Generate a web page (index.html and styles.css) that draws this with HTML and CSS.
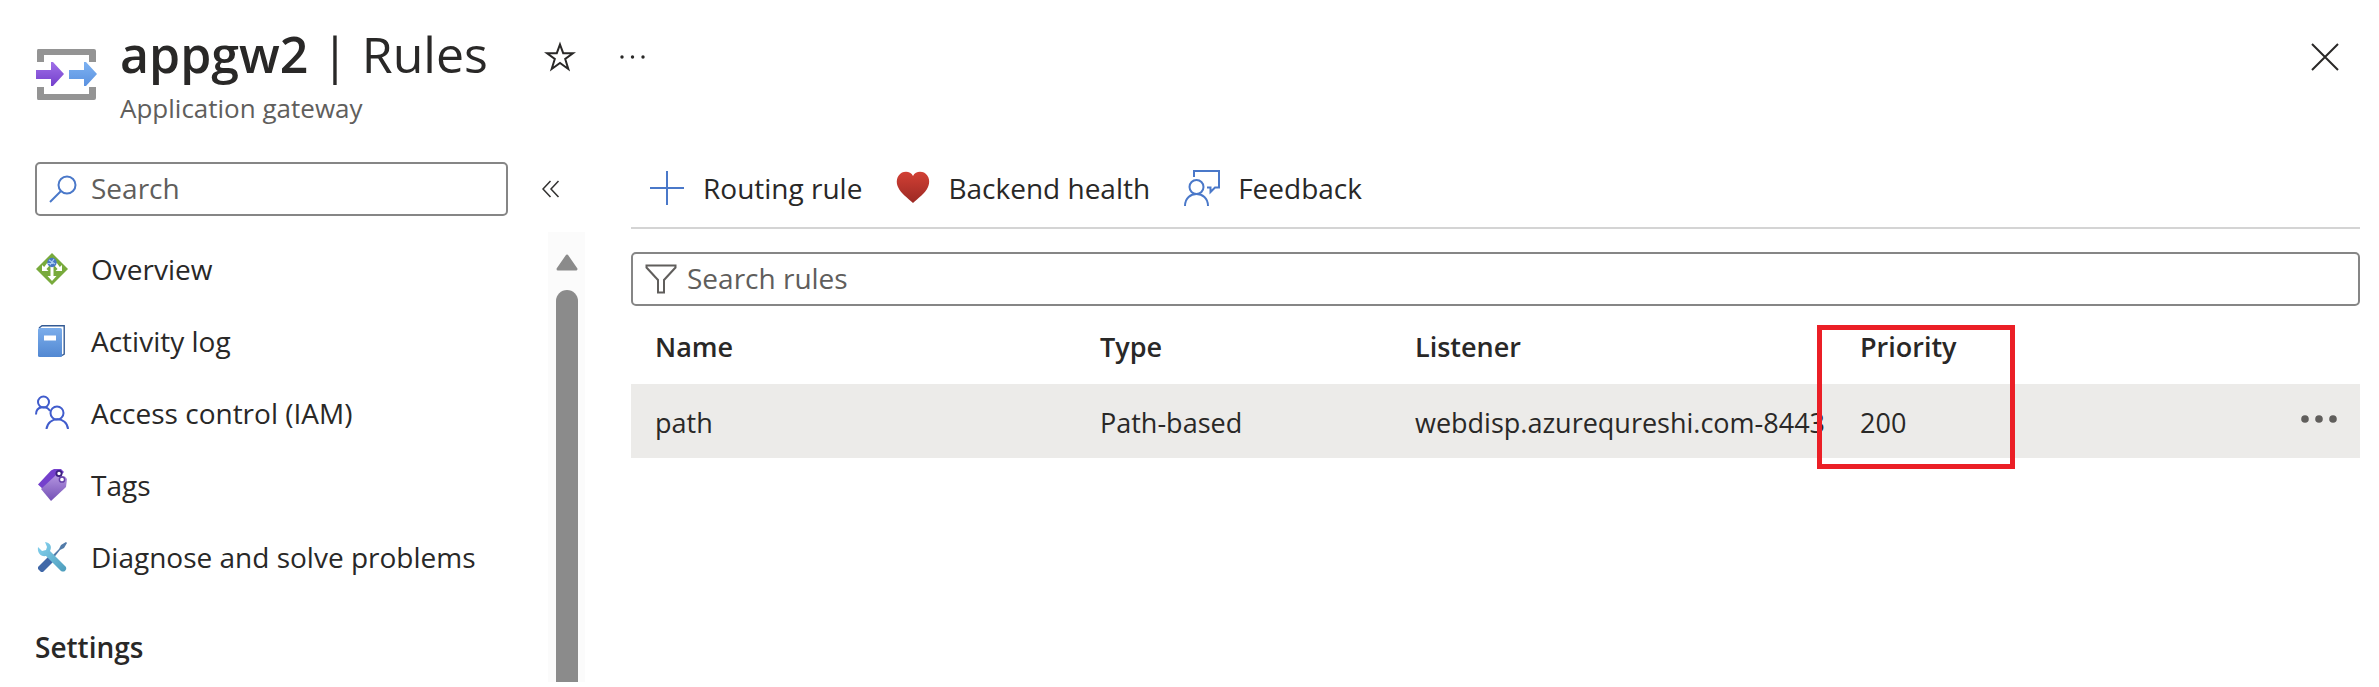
FILE: index.html
```html
<!DOCTYPE html>
<html lang="en">
<head>
<meta charset="utf-8">
<title>appgw2 | Rules</title>
<link rel="stylesheet" href="styles.css">
</head>
<body>
<div class="blade">
  <header class="blade-header">
    <svg class="resource-icon" viewBox="0 0 62 52" aria-hidden="true">
      <defs>
        <linearGradient id="gPurple" x1="0" y1="0" x2="0" y2="1"><stop offset="0" stop-color="#a070e8"/><stop offset="1" stop-color="#7440cc"/></linearGradient>
        <linearGradient id="gBlue" x1="0" y1="0" x2="0" y2="1"><stop offset="0" stop-color="#7db2f2"/><stop offset="1" stop-color="#5b92e0"/></linearGradient>
      </defs>
      <path d="M2 0H58Q60 0 60 2V13H53V6H8V13H1V2Q1 0 2 0ZM1 38H8V45H53V38H60V49Q60 51 58 51H2Q1 51 1 49Z" fill="#949494"/>
      <path d="M0 21H15V13H17L28 25L17 37H15V30H0Z" fill="url(#gPurple)"/>
      <path d="M33 21H48V13H50L61 25L50 37H48V30H33Z" fill="url(#gBlue)"/>
    </svg>
    <div class="titles">
      <div class="title-row">
        <h1><strong>appgw2</strong> | Rules</h1>
        <button class="icon-button star" aria-label="Add to favorites">
          <svg width="32" height="32" viewBox="0 0 32 32"><path d="M16 3.500L19.200 12.200H29L21.200 18L24.300 28L16 22L7.700 28L10.800 18L3 12.200H12.800Z" fill="none" stroke="#292827" stroke-width="2"/></svg>
        </button>
        <button class="icon-button" aria-label="More">
          <svg width="28" height="32" viewBox="0 0 28 32" fill="#292827"><circle cx="3" cy="16" r="1.700"/><circle cx="13.500" cy="16" r="1.700"/><circle cx="24" cy="16" r="1.700"/></svg>
        </button>
      </div>
      <p class="subtitle">Application gateway</p>
    </div>
    <button class="icon-button close" aria-label="Close">
      <svg width="28" height="28" viewBox="0 0 28 28"><path d="M1 1L27 27M27 1L1 27" stroke="#292827" stroke-width="2"/></svg>
    </button>
  </header>

  <div class="columns">
    <aside class="sidebar">
      <div class="search-row">
        <label class="field menu-search">
          <svg width="28" height="28" viewBox="0 0 28 28" fill="none" stroke="#4a78c9" stroke-width="2"><circle cx="18" cy="10" r="8.500"/><path d="M12 16L1 27"/></svg>
          <input type="text" placeholder="Search" aria-label="Search">
        </label>
        <button class="icon-button collapse" aria-label="Collapse menu">
          <svg width="18" height="18" viewBox="0 0 18 18" fill="none" stroke="#323130" stroke-width="1.500"><path d="M8.500 1L1 9L8.500 17M16.500 1L9 9L16.500 17"/></svg>
        </button>
      </div>
      <div class="menu">
        <nav>
          <a href="#" class="menu-item">
            <svg viewBox="0 0 32 32"><path d="M16 0L32 16L16 32L0 16Z" fill="#78aa3c"/><g fill="#fff"><path d="M14.500 12H17.500V23H20.500L16 28L11.500 23H14.500Z"/><path d="M11.500 9.500L14 12L10.500 16L12.500 18H6V12L8.200 14Z"/><path d="M20.500 9.500L18 12L21.500 16L19.500 18H26V12L23.800 14Z"/></g><circle cx="16" cy="9.500" r="4.700" fill="#4777c4"/><path d="M13 7L19 11M18 6L14 12M12 10.500H17" stroke="#a9ccf1" stroke-width="1.200"/></svg>
            Overview</a>
          <a href="#" class="menu-item">
            <svg viewBox="0 0 32 32"><defs><linearGradient id="gBook" x1="0" y1="0" x2="0" y2="1"><stop offset="0" stop-color="#7badeb"/><stop offset="1" stop-color="#5288d2"/></linearGradient></defs><path d="M3 3L6 .800H28.200V29L25 31" fill="#fff" stroke="#335a94" stroke-width="1.400"/><rect x="2" y="3" width="24" height="29" rx="1.500" fill="url(#gBook)"/><rect x="8" y="10.500" width="12" height="5" fill="#fff"/></svg>
            Activity log</a>
          <a href="#" class="menu-item">
            <svg viewBox="0 0 32 32" fill="none" stroke="#405ccc" stroke-width="2" overflow="visible"><circle cx="7.500" cy="5" r="5.500"/><path d="M0 17.500C0 8.500 11 8.500 14 14"/><circle cx="21" cy="16" r="6.500"/><path d="M10.500 32C12 19 31 19 32 32"/></svg>
            Access control (IAM)</a>
          <a href="#" class="menu-item">
            <svg viewBox="0 0 32 32"><defs><linearGradient id="gTag" x1="0" y1="0" x2="0" y2="1"><stop offset="0" stop-color="#b394e0"/><stop offset="1" stop-color="#7450b5"/></linearGradient></defs><path d="M2 15.500L15 1.500L18 0H25L28 3L9 22Z" fill="#7440cc"/><path d="M5 20L20 6L29 7.500L31 10L30 18L15 32Z" fill="url(#gTag)"/><circle cx="23" cy="4.500" r="2.600" fill="#fff" stroke="#3c207e" stroke-width="1.800"/><circle cx="26" cy="10.500" r="2.600" fill="#fff" stroke="#6540a8" stroke-width="1.500"/></svg>
            Tags</a>
          <a href="#" class="menu-item">
            <svg viewBox="0 0 32 32"><defs><linearGradient id="gWrench" x1="0" y1="0" x2="1" y2="1"><stop offset="0" stop-color="#86d3f0"/><stop offset="1" stop-color="#4c9cbb"/></linearGradient></defs><path d="M2 26L12 16L17 21L7 31H5L2 28Z" fill="#4068a8"/><path d="M14 17L23 8L25 4L30 1L31 2L28 7L24 9L16 19Z" fill="#527ba9"/><path d="M9 1C15 2 16 6 14 10L30 26Q31 28 29 30Q27 31 25 30L10 15C5 16 1 12 2 6L6 10L10 9L11 6Z" fill="url(#gWrench)"/></svg>
            Diagnose and solve problems</a>
          <h2>Settings</h2>
        </nav>
        <div class="scroll-track" aria-hidden="true">
          <svg width="24" height="18" viewBox="0 0 24 18"><path d="M3 16L12 3L21 16Z" fill="#8b8b8b" stroke="#8b8b8b" stroke-width="3" stroke-linejoin="round"/></svg>
          <div class="scroll-thumb"></div>
        </div>
      </div>
    </aside>

    <main class="content">
      <div class="toolbar">
        <button class="command add">
          <svg width="36" height="36" viewBox="0 0 36 36"><path d="M18 1V35M1 18H35" stroke="#4a78c9" stroke-width="2"/></svg>
          Routing rule</button>
        <button class="command heart">
          <svg width="34" height="34" viewBox="0 0 34 34"><defs><linearGradient id="gHeart" x1="0" y1="0" x2="0" y2="1"><stop offset="0" stop-color="#d24035"/><stop offset="1" stop-color="#9c2923"/></linearGradient></defs><path d="M17 5C19 0 25 0 28 1.500C34 5 34 12 32 16C29 23 22 27 17 32C12 27 5 23 2 16C0 12 0 5 6 1.500C9 0 15 0 17 5Z" fill="url(#gHeart)"/></svg>
          Backend health</button>
        <button class="command">
          <svg width="36" height="36" viewBox="0 0 36 36" fill="none" stroke="#4a78c9" stroke-width="2"><path d="M10 7V1H35V17.500H31L26.500 22V17.500H23"/><circle cx="12.500" cy="17" r="7"/><path d="M1 36C1 20 24 20 24 36"/></svg>
          Feedback</button>
      </div>
      <label class="field filter">
        <svg width="32" height="30" viewBox="0 0 32 30" fill="none" stroke="#605e5c" stroke-width="2"><path d="M1.500 1.500H30.500V3.500L19 16V28.500H13V16L1.500 3.500Z"/></svg>
        <input type="text" placeholder="Search rules" aria-label="Search rules">
      </label>
      <table class="rules">
        <colgroup><col class="col-name"><col class="col-type"><col class="col-listener"><col></colgroup>
        <thead>
          <tr><th>Name</th><th>Type</th><th>Listener</th><th class="priority">Priority<span class="highlight"></span></th></tr>
        </thead>
        <tbody>
          <tr><td>path</td><td>Path-based</td><td>webdisp.azurequreshi.com-8443</td>
            <td><div class="last-cell">200
              <button class="icon-button row-actions" aria-label="Row actions"><svg width="38" height="12" viewBox="0 0 38 12" fill="#605e5c"><circle cx="5" cy="6" r="3.800"/><circle cx="19" cy="6" r="3.800"/><circle cx="33" cy="6" r="3.800"/></svg></button>
            </div></td></tr>
        </tbody>
      </table>
    </main>
  </div>
</div>
</body>
</html>
```
FILE: styles.css
```css
* { box-sizing: border-box; }
body {
  margin: 0;
  background: #fff;
  color: #292827;
  font: 28px/40px "Open Sans", "Noto Sans", sans-serif;
}
h1, h2, p { margin: 0; }
svg { display: block; flex: none; }
button, input { font: inherit; color: inherit; }
button { background: none; border: 0; padding: 0; cursor: pointer; }

.blade {
  min-height: 100vh;
  display: flex;
  flex-direction: column;
  padding-bottom: 5px;
}
.blade-header {
  display: flex;
  align-items: flex-start;
  gap: 22px;
  height: 162px;
  padding: 20px 40px 0 36px;
}
.resource-icon { width: 62px; height: 52px; margin-top: 29px; }
.titles { flex: 1; }
.title-row { display: flex; align-items: center; height: 68px; }
.title-row .icon-button { padding-top: 5px; }
h1 { font-size: 50px; line-height: 68px; font-weight: 400; white-space: nowrap; }
h1 strong { font-weight: 600; }
.star { margin: 0 43px 0 56px; }
.subtitle { color: #605e5c; font-size: 26px; }
.close { margin-top: 23px; }

.columns { flex: 1; display: flex; gap: 46px; }
.sidebar {
  width: 585px;
  flex: none;
  padding-left: 35px;
  display: flex;
  flex-direction: column;
}
.search-row { display: flex; align-items: center; gap: 34px; }
.field {
  display: flex;
  align-items: center;
  height: 54px;
  border: 2px solid #868686;
  border-radius: 5px;
  padding: 0 12px;
}
.field input {
  flex: 1;
  min-width: 0;
  border: 0;
  padding: 0 0 2px;
  outline: 0;
  background: none;
}
.field input::placeholder { color: #605e5c; opacity: 1; }
.menu-search { width: 473px; gap: 14px; }

.menu { flex: 1; display: flex; justify-content: space-between; margin-top: 16px; }
.menu nav { padding-top: 1px; }
.menu-item {
  display: flex;
  align-items: center;
  gap: 23px;
  height: 72px;
  padding-left: 1px;
  color: inherit;
  text-decoration: none;
  white-space: nowrap;
}
.menu-item svg { width: 32px; height: 32px; }
h2 { font-size: 28px; line-height: 40px; font-weight: 600; margin-top: 34px; }
.scroll-track {
  width: 37px;
  background: #fbfbfb;
  display: flex;
  flex-direction: column;
  align-items: center;
  gap: 19px;
  padding-top: 21px;
}
.scroll-thumb { flex: 1; width: 22px; background: #8b8b8b; border-radius: 11px 11px 0 0; }

.content { flex: 1; min-width: 0; padding-right: 19px; }
.toolbar {
  display: flex;
  align-items: flex-start;
  gap: 34px;
  height: 67px;
  padding: 4px 0 0 18px;
  border-bottom: 2px solid #d4d4d4;
}
.command { display: flex; align-items: center; gap: 18px; height: 44px; white-space: nowrap; }
.filter { margin-top: 23px; gap: 10px; }

.rules { width: 100%; border-collapse: collapse; table-layout: fixed; font-size: 27px; }
.col-name, .col-listener { width: 445px; }
.col-type { width: 315px; }
.rules th, .rules td { padding: 0 0 0 24px; text-align: left; white-space: nowrap; }
.rules th { height: 78px; padding-top: 3px; font-weight: 600; }
.rules td { height: 74px; background: #ecebe9; padding-top: 4px; }
.rules .priority { position: relative; }
.highlight {
  position: absolute;
  left: -19px;
  top: 19px;
  width: 198px;
  height: 144px;
  border: 5px solid #eb1f26;
}
.last-cell { display: flex; align-items: center; justify-content: space-between; padding-right: 22px; }
.row-actions { padding-bottom: 8px; }
```
